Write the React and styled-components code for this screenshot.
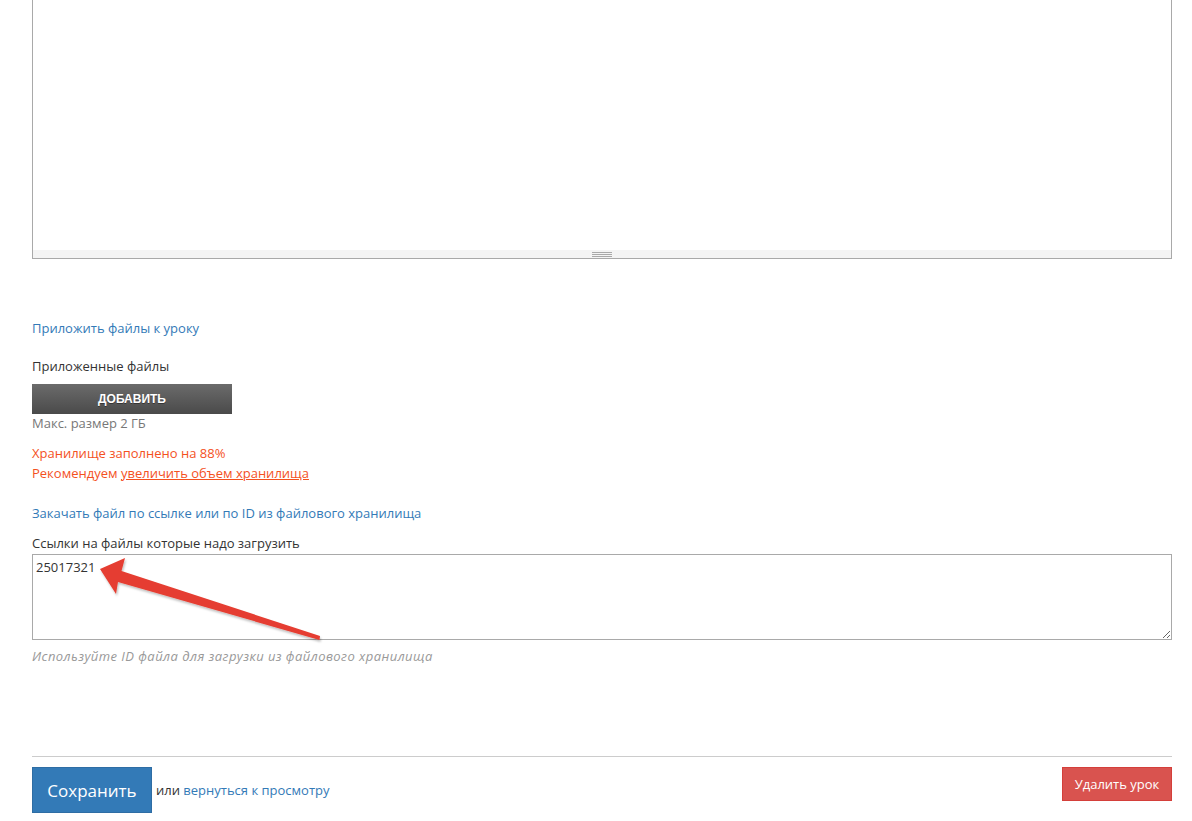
import React from "react";
import styled, { createGlobalStyle } from "styled-components";

const GlobalStyle = createGlobalStyle`
  html, body {
    margin: 0;
    padding: 0;
    background: #ffffff;
  }
  body {
    font-family: "Open Sans", "Liberation Sans", Arial, sans-serif;
    font-size: 13px;
    color: #333333;
  }
`;

const Page = styled.div`
  position: relative;
  width: 1140px;
  padding-left: 32px;
  height: 821px;
  overflow: hidden;
`;

const Editor = styled.div`
  display: flex;
  flex-direction: column;
  height: 258px;
  border: 1px solid #a9a9a9;
  border-top: 0;
`;

const EditorBody = styled.div`
  flex: 1;
  background: #ffffff;
`;

const ResizeBar = styled.div`
  height: 8px;
  background: #f4f4f4;
  display: flex;
  justify-content: center;
  align-items: center;
`;

const Grip = styled.div`
  width: 20px;
  height: 5px;
  border-top: 1px solid #a9a9a9;
  border-bottom: 1px solid #a9a9a9;
  position: relative;
  box-sizing: border-box;
  &::after {
    content: "";
    position: absolute;
    left: 0;
    right: 0;
    top: 1px;
    height: 1px;
    background: #a9a9a9;
  }
`;

const Line = styled.div`
  line-height: ${(p) => p.$lh || 20}px;
  margin-top: ${(p) => p.$mt || 0}px;
  color: ${(p) => p.$color || "#333333"};
  font-style: ${(p) => (p.$italic ? "italic" : "normal")};
  letter-spacing: ${(p) => (p.$italic ? "0.45px" : "normal")};
`;

const Link = styled.a`
  color: #337ab7;
  text-decoration: none;
  cursor: pointer;
`;

const WarnLink = styled.a`
  color: #f4511e;
  text-decoration: underline;
  cursor: pointer;
`;

const AddButton = styled.button`
  display: block;
  width: 200px;
  height: 30px;
  margin-top: 8px;
  border: 0;
  background: linear-gradient(#6b6b6b, #4a4a4a);
  color: #ffffff;
  font-family: "Liberation Sans", Arial, sans-serif;
  font-weight: bold;
  font-size: 12px;
  text-transform: uppercase;
  text-shadow: 0 1px 0 rgba(0, 0, 0, 0.4);
  cursor: pointer;
`;

const LinksArea = styled.textarea`
  display: block;
  box-sizing: border-box;
  width: 1140px;
  height: 86px;
  margin: 1px 0 0;
  padding: 3px 3px;
  border: 1px solid #a9a9a9;
  font-family: "Open Sans", "Liberation Sans", Arial, sans-serif;
  font-size: 13px;
  line-height: 18px;
  color: #333333;
  resize: vertical;
  outline: none;
`;

const Divider = styled.hr`
  margin: 90px 0 0;
  border: 0;
  border-top: 1px solid #cccccc;
`;

const Actions = styled.div`
  display: flex;
  align-items: flex-start;
  margin-top: 10px;
`;

const SaveButton = styled.button`
  width: 120px;
  height: 46px;
  border: 1px solid #2e6da4;
  background: #337ab7;
  color: #ffffff;
  font-family: "Open Sans", "Liberation Sans", Arial, sans-serif;
  font-size: 17px;
  cursor: pointer;
`;

const OrText = styled.span`
  margin-left: 4px;
  line-height: 46px;
`;

const DeleteButton = styled.button`
  margin-left: auto;
  width: 110px;
  height: 34px;
  border: 1px solid #d43f3a;
  background: #d9534f;
  color: #ffffff;
  font-family: "Open Sans", "Liberation Sans", Arial, sans-serif;
  font-size: 13px;
  cursor: pointer;
`;

const Arrow = styled.svg`
  position: absolute;
  left: 0;
  top: 0;
  pointer-events: none;
`;

export default function App() {
  return (
    <>
      <GlobalStyle />
      <Page>
        <Editor>
          <EditorBody />
          <ResizeBar>
            <Grip />
          </ResizeBar>
        </Editor>

        <Line $mt={59}>
          <Link>Приложить файлы к уроку</Link>
        </Line>
        <Line $mt={18}>Приложенные файлы</Line>
        <AddButton>Добавить</AddButton>
        <Line $lh={18} $color="#777777">
          Макс. размер 2 ГБ
        </Line>
        <Line $mt={11} $color="#f4511e">
          Хранилище заполнено на 88%
        </Line>
        <Line $color="#f4511e">
          Рекомендуем <WarnLink>увеличить объем хранилища</WarnLink>
        </Line>

        <Line $mt={20}>
          <Link>Закачать файл по ссылке или по ID из файлового хранилища</Link>
        </Line>
        <Line $mt={10}>Ссылки на файлы которые надо загрузить</Line>
        <LinksArea defaultValue="25017321" />
        <Line $mt={6} $color="#999999" $italic>
          Используйте ID файла для загрузки из файлового хранилища
        </Line>

        <Divider />
        <Actions>
          <SaveButton>Сохранить</SaveButton>
          <OrText>
            или <Link>вернуться к просмотру</Link>
          </OrText>
          <DeleteButton>Удалить урок</DeleteButton>
        </Actions>

        <Arrow width="400" height="700" viewBox="0 0 400 700">
          <defs>
            <filter id="sh" x="-10%" y="-10%" width="120%" height="130%">
              <feDropShadow dx="1" dy="2" stdDeviation="1.2" floodColor="#000" floodOpacity="0.25" />
            </filter>
          </defs>
          <polygon
            points="100,569 125,558 121.5,571 320,636 319.5,640 118,582 116,594"
            fill="#e53d30"
            filter="url(#sh)"
          />
        </Arrow>
      </Page>
    </>
  );
}
